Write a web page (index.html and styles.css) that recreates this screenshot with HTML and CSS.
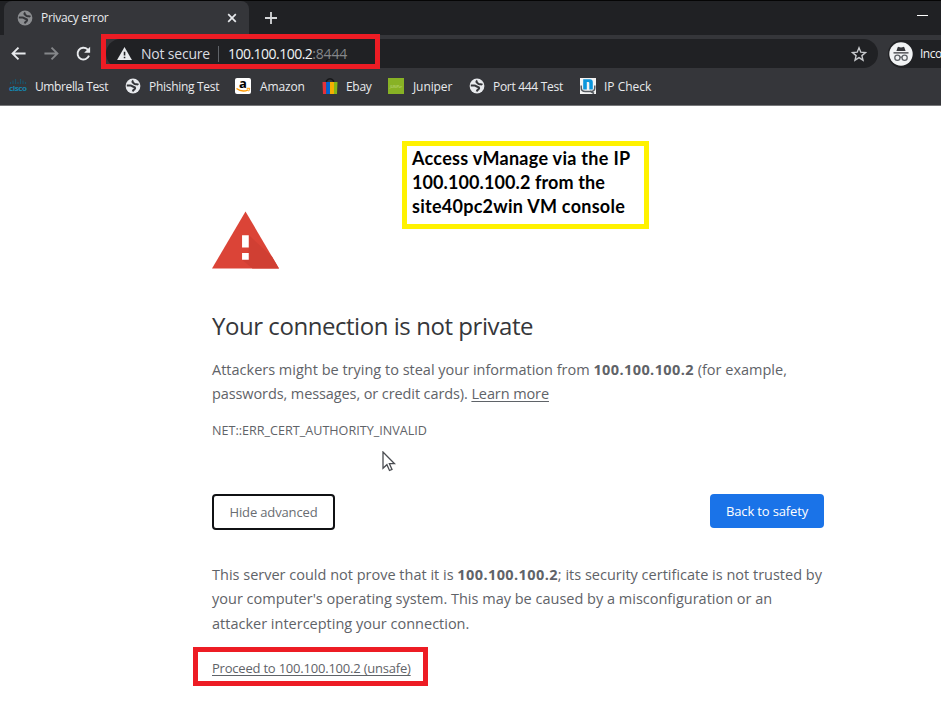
FILE: index.html
```html
<!DOCTYPE html>
<html lang="en">
<head>
<meta charset="utf-8">
<title>Privacy error</title>
<link rel="stylesheet" href="styles.css">
</head>
<body>
<svg class="defs" aria-hidden="true">
  <symbol id="globe" viewBox="0 0 16 16">
    <circle cx="8" cy="8" r="7.4" fill="currentColor"/>
    <path d="M1.8 7.6h3.6c1.8 0 2.2 1.3 3.6 1.5 1.4.2 1.4 1.3.6 2-.9.7-1.6 1-1.8 2.4M8.4 2.6c-1.4.8-1.2 1.6-.2 2.2 1 .7 1.2 1.5 2.6 1.5 1.2 0 1.8-.2 2.6.5" fill="none" stroke="#35363a" stroke-width="2"/>
  </symbol>
</svg>
<header class="browser">
  <div class="tabstrip">
    <div class="tab">
      <svg class="tab-icon"><use href="#globe"/></svg>
      <span class="tab-title">Privacy error</span>
      <svg class="tab-close" viewBox="0 0 10 10"><path d="M1.2 1.2l7.6 7.6M8.8 1.2L1.2 8.8"/></svg>
    </div>
    <svg class="new-tab" viewBox="0 0 14 14"><path d="M7 1v12M1 7h12"/></svg>
    <span class="minimize"></span>
  </div>
  <div class="toolbar">
    <svg class="nav" viewBox="0 0 18 18"><path d="M16.5 9H3M9 2.7L2.7 9 9 15.3"/></svg>
    <svg class="nav dim" viewBox="0 0 18 18"><path d="M1.5 9H15M9 2.7L15.3 9 9 15.3"/></svg>
    <svg class="nav reload" viewBox="0 0 18 18"><path d="M14.8 11.2A6.2 6.2 0 1 1 13.3 4.7L15 6.4"/><path class="solid" d="M16 1.8v6.3H9.7z"/></svg>
    <div class="omnibox">
      <svg class="warn" viewBox="0 0 16 14"><path fill="#e8eaed" d="M8 0l8 14H0z"/><path fill="#202124" d="M7.2 5h1.7v4.1H7.2zM7.2 10.5h1.7v1.7H7.2z"/></svg>
      <span class="state">Not secure</span>
      <i class="divider"></i>
      <span class="url">100.100.100.2<span class="port">:8444</span></span>
      <svg class="star" viewBox="0 0 16 16"><path d="M8 1.8l1.8 4.4 4.7.3-3.6 3.1 1.1 4.6-4-2.5-4 2.5 1.1-4.6L1.5 6.5l4.7-.3z"/></svg>
    </div>
    <div class="profile">
      <svg class="incognito" viewBox="0 0 24 24"><circle cx="12" cy="12" r="11.7" fill="#f1f3f4"/><path d="M8.6 5.5q.3-.8 1.1-.6l2.3.5 2.3-.5q.8-.2 1.1.6L16.6 9H7.4zM4.5 10.3h15v1.2h-15z" fill="#35363a"/><g fill="none" stroke="#5f6368" stroke-width="1.3"><circle cx="8.4" cy="15.8" r="2.6"/><circle cx="15.6" cy="15.8" r="2.6"/><path d="M11 15.4q1-.7 2 0"/></g></svg>
      <span class="profile-name">Inco</span>
    </div>
    <div class="mark mark-url"></div>
  </div>
  <nav class="bookmarks">
    <a class="bm b1"><svg class="cisco" viewBox="0 0 18 16"><path d="M1.5 4v2M4 2.5V6M6.5 1v5M9 4v2M11.5 1v5M14 2.5V6M16.5 4v2" stroke="#1c5368" stroke-width="1.2"/><text x="0" y="13.3" textLength="17.5" lengthAdjust="spacingAndGlyphs">cisco</text></svg><span>Umbrella Test</span></a>
    <a class="bm b2"><svg><use href="#globe"/></svg><span>Phishing Test</span></a>
    <a class="bm b3"><svg viewBox="0 0 16 16"><rect width="16" height="16" rx="2" fill="#fff"/><text class="amazon" x="4" y="9.7">a</text><path d="M1.5 10.5q6 4.4 11.5 1.3" stroke="#f90" stroke-width="1.5" fill="none"/><path d="M11.7 10.3h3l-1 3" stroke="#f90" fill="none"/></svg><span>Amazon</span></a>
    <a class="bm b4"><svg viewBox="0 0 16 16"><path d="M4.5 4.5V2.7Q8-1 11.5 2.7v1.8" stroke="#17181a" stroke-width="1.5" fill="none"/><path fill="#e53238" d="M.5 4h4v12H1z"/><path fill="#0064d2" d="M4.2 4H8v12H4.2z"/><path fill="#f5af02" d="M8 4h4v12H8z"/><path fill="#86b817" d="M12 4h3.5L15 16h-3z"/></svg><span>Ebay</span></a>
    <a class="bm b5"><svg viewBox="0 0 16 16"><path fill="#88b225" d="M0 0h16v16H0z"/><text class="juniper" x="2" y="9.5" textLength="12" lengthAdjust="spacingAndGlyphs">JUNIPer</text></svg><span>Juniper</span></a>
    <a class="bm b6"><svg><use href="#globe"/></svg><span>Port 444 Test</span></a>
    <a class="bm b7"><svg viewBox="0 0 16 16"><path fill="#f3f3f3" d="M0 0h16v16H0z"/><path d="M1.2 7.5v2q0 4 4 4h5.6q4 0 4-4v-2M10 13l4 2.5" fill="none" stroke="#555a60" stroke-width="1.5"/><path fill="#0c96dc" d="M3.2 1.3h6.6q3 0 3 3v7.2H9.3V5q0-1-1-1H6.8v7.5H3.2z"/></svg><span>IP Check</span></a>
  </nav>
</header>
<main class="page">
  <aside class="callout"><span class="c1">Access vManage via the IP</span><br><span class="c2">100.100.100.2 from the</span><br><span class="c3">site40pc2win VM console</span></aside>
  <svg class="alert" viewBox="0 0 68 58"><path fill="#db4437" d="M34 0l34 58H0z"/><path fill="#d03f33" d="M37.3 24L61 46l7 12H41l-10.5-9 6.8-8.5z"/><path fill="#fff" d="M30.5 24.3h6.8v12.4h-6.8zM30.5 42.3h6.8V49h-6.8z"/></svg>
  <h1>Your connection is not private</h1>
  <p class="body"><span class="l1">Attackers might be trying to steal your information from <b>100.100.100.2</b> (for example,</span><br><span class="l2">passwords, messages, or credit cards). <a class="link">Learn more</a></span></p>
  <p class="code"><span>NET::ERR_CERT_AUTHORITY_INVALID</span></p>
  <div class="actions">
    <button class="btn"><span>Hide advanced</span></button>
    <button class="btn primary"><span>Back to safety</span></button>
  </div>
  <p class="body details"><span class="l3">This server could not prove that it is <b>100.100.100.2</b>; its security certificate is not trusted by</span><br><span class="l4">your computer's operating system. This may be caused by a misconfiguration or an</span><br><span class="l5">attacker intercepting your connection.</span></p>
  <div class="proceed"><a>Proceed to 100.100.100.2 (unsafe)</a></div>
  <svg class="cursor" viewBox="0 0 14 21"><path d="M1 1v16.2l3.9-3.5 2.6 5.8 2.5-1.1-2.6-5.7h5.2z"/></svg>
</main>
</body>
</html>
```
FILE: styles.css
```css
* { box-sizing: border-box; }
body {
  margin: 0;
  width: 941px;
  height: 703px;
  overflow: hidden;
  background: #fff;
  font-family: "Open Sans", "Noto Sans", sans-serif;
  color: #5f6368;
}
.defs { position: absolute; width: 0; height: 0; }
svg { display: block; flex: none; }
span, a { white-space: nowrap; }

.browser { height: 106px; background: #35363a; border-bottom: 1px solid #77787a; overflow: hidden; }
.tabstrip { height: 35px; display: flex; align-items: center; background: #202124; border-top: 1px solid #050505; padding-left: 4px; }
.tab { width: 245px; height: 34px; display: flex; align-items: center; background: #35363a; border-radius: 8px 8px 0 0; padding: 0 12px 1px 13px; }
.tab-icon { width: 16px; height: 16px; color: #8c8e91; }
.tab-title { margin-left: 8px; font-size: 12px; letter-spacing: -.3px; color: #e8eaed; }
.tab-close { width: 10px; height: 10px; margin-left: auto; stroke: #e8eaed; stroke-width: 1.7; }
.new-tab { width: 14px; height: 14px; margin-left: 15px; stroke: #d5d7da; stroke-width: 1.8; }
.minimize { width: 11px; height: 1px; background: #fff; margin: -5px 13px 0 auto; }

.toolbar { position: relative; height: 35px; display: flex; align-items: center; padding: 4px 0 2px 10px; background: #35363a; }
.nav { width: 17px; height: 17px; margin-right: 16px; fill: none; stroke: #e8eaed; stroke-width: 2; }
.nav.dim { stroke: #85878a; }
.nav.reload { margin: 0 17px 0 -1px; }
.nav .solid { fill: #e8eaed; stroke: none; }
.omnibox { flex: none; width: 772px; height: 29px; margin-left: -3px; display: flex; align-items: center; border-radius: 15px; background: #202124; padding: 0 11px; }
.warn { width: 15px; height: 13px; }
.state { margin-left: 9px; font-size: 14px; color: #dadce0; letter-spacing: -.2px; }
.divider { width: 1px; height: 16px; background: #5f6368; margin: 0 9px 0 8px; }
.url { font-size: 14px; color: #f1f3f4; letter-spacing: -.52px; }
.port { color: #85878a; letter-spacing: -.2px; }
.star { width: 16px; height: 16px; margin-left: auto; fill: none; stroke: #c8cacd; stroke-width: 1.4; }
.profile { height: 28px; flex: none; width: 90px; margin-left: 10px; display: flex; align-items: center; background: #202124; border-radius: 14px 0 0 14px; padding-left: 1px; }
.incognito { width: 24px; height: 24px; }
.profile-name { margin-left: 7px; font-size: 12px; letter-spacing: -.5px; color: #f1f3f4; }
.mark { border: 5px solid #ed1c24; }
.mark-url { position: absolute; left: 101px; top: -1px; width: 279px; height: 35px; }

.bookmarks { height: 35px; display: flex; align-items: center; padding: 0 0 3px 9px; }
.bm { display: flex; align-items: center; gap: 8px; font-size: 12px; letter-spacing: -.3px; color: #e8eaed; }
.bm svg { width: 16px; height: 16px; overflow: visible; }
.bm svg.cisco { width: 18px; }
.b1 { width: 116px; letter-spacing: -.38px; }
.b2 { width: 110px; }
.b3 { width: 87px; gap: 9px; letter-spacing: -.15px; }
.b4 { width: 66px; }
.b5 { width: 81px; gap: 9px; letter-spacing: -.1px; }
.b6 { width: 111px; }
.b7 { letter-spacing: 0; }
.cisco text { font: bold 6.5px "Open Sans", sans-serif; fill: #1583ac; }
.amazon { font: bold 13px/1 "Open Sans", sans-serif; fill: #000; }
.juniper { font: italic 4px "Open Sans", sans-serif; fill: #c4dc8a; }

.page { position: relative; height: 597px; padding: 105px 0 0 212px; }
.callout { position: absolute; left: 402px; top: 35px; width: 247px; height: 88px; border: 5px solid #fff200; padding: 0 5px; background: #fff; color: #000; font: bold 18px/24px Lato, sans-serif; }
.c1 { letter-spacing: .3px; }
.c2 { letter-spacing: .1px; }
.c3 { letter-spacing: .26px; }
.alert { width: 67px; height: 58px; }
h1 { margin: 41px 0 0; font-size: 24px; font-weight: 400; line-height: 32px; letter-spacing: -.45px; color: #36373a; white-space: nowrap; }
p { margin: 0; }
.body { margin-top: 16px; font-size: 14.5px; line-height: 24.4px; }
.body b { letter-spacing: .4px; }
.l2 { letter-spacing: -.1px; }
.link { text-decoration: underline; text-underline-offset: 2px; }
.code { margin-top: 13px; font-size: 12.6px; line-height: 22px; }
.actions { width: 612px; margin-top: 52px; display: flex; justify-content: space-between; align-items: flex-start; }
.btn { width: 123px; height: 36px; padding: 0; font: 13px "Open Sans", sans-serif; letter-spacing: -.15px; color: #696d72; background: #fff; border: 2px solid #101114; border-radius: 4px; }
.btn.primary { width: 114px; height: 34px; color: #fff; background: #1a73e8; border: 0; }
.details { margin-top: 33px; }
.proceed { width: 235px; height: 39px; margin: 11px 0 0 -19px; border: 5px solid #ed1c24; padding: 5px 0 0 14px; font-size: 13px; line-height: 22px; letter-spacing: -.21px; }
.proceed a { text-decoration: underline; text-underline-offset: 2px; }
.cursor { position: absolute; left: 382px; top: 345px; width: 14px; height: 21px; fill: #fff; stroke: #4b4d52; stroke-width: 1.3; }
```
